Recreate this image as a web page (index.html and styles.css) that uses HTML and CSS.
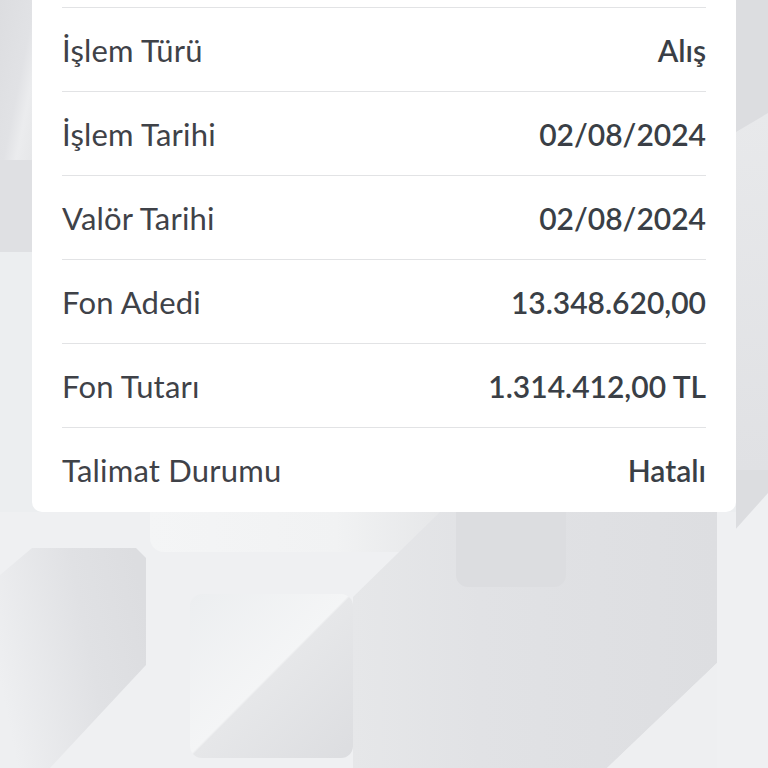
FILE: index.html
```html
<!DOCTYPE html>
<html lang="tr">
<head>
    <meta charset="UTF-8">
    <meta name="viewport" content="width=device-width, initial-scale=1.0">
    <title>Talimat Detayı</title>
    <link rel="stylesheet" href="styles.css">
</head>
<body>
    <svg class="backdrop" width="768" height="768" viewBox="0 0 768 768" aria-hidden="true">
        <defs>
            <linearGradient id="gTopLeft" x1="0" y1="0" x2="1" y2="1">
                <stop offset="0" stop-color="#dcdde0"/>
                <stop offset="0.55" stop-color="#e1e2e5"/>
                <stop offset="0.75" stop-color="#ebecee"/>
                <stop offset="1" stop-color="#e6e7e9"/>
            </linearGradient>
            <linearGradient id="gRightMid" x1="0" y1="0" x2="0" y2="1">
                <stop offset="0" stop-color="#e8e9eb"/>
                <stop offset="1" stop-color="#e0e1e4"/>
            </linearGradient>
            <linearGradient id="gBehind" x1="0" y1="0" x2="1" y2="0">
                <stop offset="0" stop-color="#f4f5f6"/>
                <stop offset="0.6" stop-color="#f1f2f3"/>
                <stop offset="1" stop-color="#e4e5e7"/>
            </linearGradient>
            <linearGradient id="gBig" x1="0" y1="0" x2="1" y2="0">
                <stop offset="0" stop-color="#e6e7e9"/>
                <stop offset="0.35" stop-color="#e1e2e5"/>
                <stop offset="1" stop-color="#dddee1"/>
            </linearGradient>
            <linearGradient id="gLeftBottom" x1="0" y1="0.6" x2="1" y2="0.3">
                <stop offset="0" stop-color="#eeeff1"/>
                <stop offset="0.6" stop-color="#e0e1e4"/>
                <stop offset="1" stop-color="#dcdde0"/>
            </linearGradient>
            <linearGradient id="gCenter" x1="0" y1="0" x2="1" y2="1">
                <stop offset="0" stop-color="#eceef0"/>
                <stop offset="0.49" stop-color="#f4f5f6"/>
                <stop offset="0.5" stop-color="#e6e7e9"/>
                <stop offset="1" stop-color="#dcdde0"/>
            </linearGradient>
        </defs>

        <rect width="768" height="768" fill="#eceef0"/>
        <rect y="512" width="768" height="256" fill="#eff0f2"/>

        <rect width="32" height="160" fill="url(#gTopLeft)"/>
        <rect y="160" width="32" height="92" fill="#dfe0e3"/>

        <rect x="736" width="32" height="768" fill="#dcdde0"/>
        <polygon points="768,113 736,132 736,470 768,470" fill="url(#gRightMid)"/>

        <rect x="150" y="470" width="310" height="82" rx="14" fill="url(#gBehind)"/>
        <polygon points="440,512 717,512 717,663 607,768 353,768 353,597" fill="url(#gBig)"/>
        <rect x="456" y="470" width="110" height="117" rx="12" fill="#dcdde0"/>

        <polygon points="768,493 717,550 717,768 768,768" fill="#eff0f2"/>
        <polygon points="717,663 717,768 607,768" fill="#eeeff1"/>

        <polygon points="32,548 136,548 146,558 146,665 50,768 0,768 0,575" fill="url(#gLeftBottom)"/>
        <rect x="190" y="594" width="163" height="164" rx="12" fill="url(#gCenter)"/>
    </svg>

    <div class="card">
        <div class="row">
            <span class="label">İşlem Türü</span>
            <span class="value">Alış</span>
        </div>
        <div class="row">
            <span class="label">İşlem Tarihi</span>
            <span class="value">02/08/2024</span>
        </div>
        <div class="row">
            <span class="label">Valör Tarihi</span>
            <span class="value">02/08/2024</span>
        </div>
        <div class="row">
            <span class="label">Fon Adedi</span>
            <span class="value">13.348.620,00</span>
        </div>
        <div class="row">
            <span class="label">Fon Tutarı</span>
            <span class="value">1.314.412,00 TL</span>
        </div>
        <div class="row">
            <span class="label">Talimat Durumu</span>
            <span class="value">Hatalı</span>
        </div>
    </div>
</body>
</html>
```

FILE: styles.css
```css
html, body {
    margin: 0;
    height: 100%;
    overflow: hidden;
}
body {
    font-family: Lato, "Noto Sans", sans-serif;
    background: #eceef0;
    position: relative;
}

/* decorative geometric background */
.backdrop {
    position: absolute;
    top: 0;
    left: 0;
}

/* card */
.card {
    position: relative;
    margin: -60px 32px 0;
    padding: 67px 30px 0;
    background: #fff;
    border-radius: 10px;
}
.row {
    display: flex;
    justify-content: space-between;
    align-items: center;
    height: 84px;
    box-sizing: border-box;
    border-top: 1.5px solid #e2e3e5;
}
.row:last-child {
    height: 85px;
}
.label {
    color: #3f4248;
    font-size: 31px;
    font-weight: 400;
    letter-spacing: 0.2px;
}
.value {
    color: #3a3f46;
    font-size: 30px;
    font-weight: 600;
}
```
